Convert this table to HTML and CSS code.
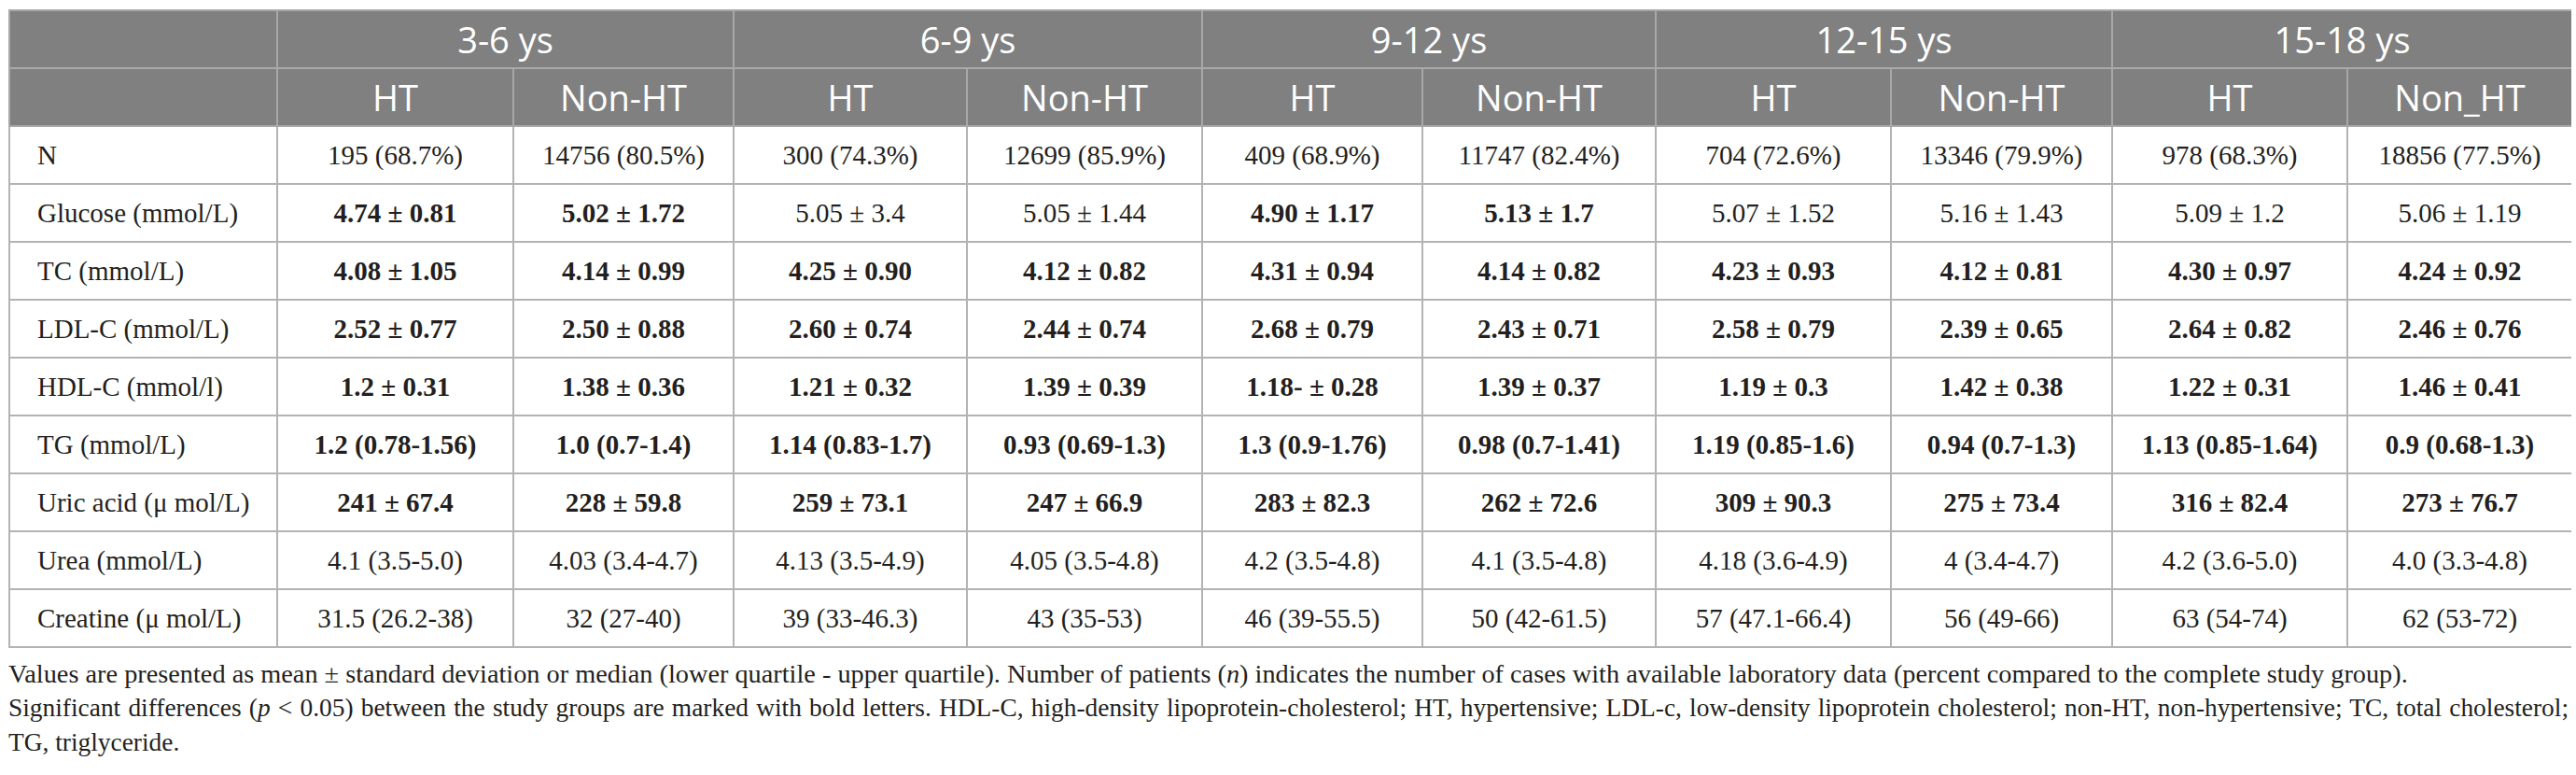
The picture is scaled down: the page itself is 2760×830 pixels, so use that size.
FILE: index.html
```html
<!DOCTYPE html>
<html lang="en">
<head>
  <meta charset="UTF-8" />
  <title>Laboratory data by age group</title>
  <link rel="stylesheet" href="styles.css">
</head>
<body>
  <table class="lab-table">
    <colgroup>
      <col><col><col><col><col><col><col><col><col><col><col>
    </colgroup>
    <thead>
      <tr>
        <th></th>
        <th colspan="2">3-6 ys</th>
        <th colspan="2">6-9 ys</th>
        <th colspan="2">9-12 ys</th>
        <th colspan="2">12-15 ys</th>
        <th colspan="2">15-18 ys</th>
      </tr>
      <tr>
        <th></th>
        <th>HT</th><th>Non-HT</th>
        <th>HT</th><th>Non-HT</th>
        <th>HT</th><th>Non-HT</th>
        <th>HT</th><th>Non-HT</th>
        <th>HT</th><th>Non_HT</th>
      </tr>
    </thead>
    <tbody>
      <tr>
        <td class="label">N</td>
        <td>195 (68.7%)</td><td>14756 (80.5%)</td>
        <td>300 (74.3%)</td><td>12699 (85.9%)</td>
        <td>409 (68.9%)</td><td>11747 (82.4%)</td>
        <td>704 (72.6%)</td><td>13346 (79.9%)</td>
        <td>978 (68.3%)</td><td>18856 (77.5%)</td>
      </tr>
      <tr>
        <td class="label">Glucose (mmol/L)</td>
        <td class="sig">4.74 ± 0.81</td><td class="sig">5.02 ± 1.72</td>
        <td>5.05 ± 3.4</td><td>5.05 ± 1.44</td>
        <td class="sig">4.90 ± 1.17</td><td class="sig">5.13 ± 1.7</td>
        <td>5.07 ± 1.52</td><td>5.16 ± 1.43</td>
        <td>5.09 ± 1.2</td><td>5.06 ± 1.19</td>
      </tr>
      <tr class="sig-row">
        <td class="label">TC (mmol/L)</td>
        <td>4.08 ± 1.05</td><td>4.14 ± 0.99</td>
        <td>4.25 ± 0.90</td><td>4.12 ± 0.82</td>
        <td>4.31 ± 0.94</td><td>4.14 ± 0.82</td>
        <td>4.23 ± 0.93</td><td>4.12 ± 0.81</td>
        <td>4.30 ± 0.97</td><td>4.24 ± 0.92</td>
      </tr>
      <tr class="sig-row">
        <td class="label">LDL-C (mmol/L)</td>
        <td>2.52 ± 0.77</td><td>2.50 ± 0.88</td>
        <td>2.60 ± 0.74</td><td>2.44 ± 0.74</td>
        <td>2.68 ± 0.79</td><td>2.43 ± 0.71</td>
        <td>2.58 ± 0.79</td><td>2.39 ± 0.65</td>
        <td>2.64 ± 0.82</td><td>2.46 ± 0.76</td>
      </tr>
      <tr class="sig-row">
        <td class="label">HDL-C (mmol/l)</td>
        <td>1.2 ± 0.31</td><td>1.38 ± 0.36</td>
        <td>1.21 ± 0.32</td><td>1.39 ± 0.39</td>
        <td>1.18- ± 0.28</td><td>1.39 ± 0.37</td>
        <td>1.19 ± 0.3</td><td>1.42 ± 0.38</td>
        <td>1.22 ± 0.31</td><td>1.46 ± 0.41</td>
      </tr>
      <tr class="sig-row">
        <td class="label">TG (mmol/L)</td>
        <td>1.2 (0.78-1.56)</td><td>1.0 (0.7-1.4)</td>
        <td>1.14 (0.83-1.7)</td><td>0.93 (0.69-1.3)</td>
        <td>1.3 (0.9-1.76)</td><td>0.98 (0.7-1.41)</td>
        <td>1.19 (0.85-1.6)</td><td>0.94 (0.7-1.3)</td>
        <td>1.13 (0.85-1.64)</td><td>0.9 (0.68-1.3)</td>
      </tr>
      <tr class="sig-row">
        <td class="label">Uric acid (μ mol/L)</td>
        <td>241 ± 67.4</td><td>228 ± 59.8</td>
        <td>259 ± 73.1</td><td>247 ± 66.9</td>
        <td>283 ± 82.3</td><td>262 ± 72.6</td>
        <td>309 ± 90.3</td><td>275 ± 73.4</td>
        <td>316 ± 82.4</td><td>273 ± 76.7</td>
      </tr>
      <tr>
        <td class="label">Urea (mmol/L)</td>
        <td>4.1 (3.5-5.0)</td><td>4.03 (3.4-4.7)</td>
        <td>4.13 (3.5-4.9)</td><td>4.05 (3.5-4.8)</td>
        <td>4.2 (3.5-4.8)</td><td>4.1 (3.5-4.8)</td>
        <td>4.18 (3.6-4.9)</td><td>4 (3.4-4.7)</td>
        <td>4.2 (3.6-5.0)</td><td>4.0 (3.3-4.8)</td>
      </tr>
      <tr>
        <td class="label">Creatine (μ mol/L)</td>
        <td>31.5 (26.2-38)</td><td>32 (27-40)</td>
        <td>39 (33-46.3)</td><td>43 (35-53)</td>
        <td>46 (39-55.5)</td><td>50 (42-61.5)</td>
        <td>57 (47.1-66.4)</td><td>56 (49-66)</td>
        <td>63 (54-74)</td><td>62 (53-72)</td>
      </tr>
    </tbody>
  </table>

  <div class="notes">
    <p>Values are presented as mean ± standard deviation or median (lower quartile - upper quartile). Number of patients (<i>n</i>) indicates the number of cases with available laboratory data (percent compared to the complete study group).</p>
    <p class="abbr">Significant differences (<i>p</i> &lt; 0.05) between the study groups are marked with bold letters. HDL-C, high-density lipoprotein-cholesterol; HT, hypertensive; LDL-c, low-density lipoprotein cholesterol; non-HT, non-hypertensive; TC, total cholesterol; <span class="keep">TG, triglyceride.</span></p>
  </div>
</body>
</html>
```

FILE: styles.css
```css
body {
  margin: 10px 5px 0 9px;
  background: #fff;
  color: #231f20;
  font-family: "Liberation Serif", "Times New Roman", serif;
}

.lab-table {
  width: 2746px;
  table-layout: fixed;
  border-collapse: collapse;
  border: 2px solid #b3b3b3;
}
/* column widths follow the source figure, which sized them by content */
.lab-table col:nth-child(1) { width: 287px; }
.lab-table col:nth-child(2) { width: 253px; }
.lab-table col:nth-child(3) { width: 236px; }
.lab-table col:nth-child(4) { width: 250px; }
.lab-table col:nth-child(5) { width: 252px; }
.lab-table col:nth-child(6) { width: 236px; }
.lab-table col:nth-child(7) { width: 250px; }
.lab-table col:nth-child(8) { width: 252px; }
.lab-table col:nth-child(9) { width: 237px; }
.lab-table col:nth-child(10) { width: 252px; }
.lab-table col:nth-child(11) { width: 241px; }

.lab-table th {
  height: 60px;
  padding: 0;
  background: #808080;
  color: #fff;
  font-family: "Open Sans", "Liberation Sans", sans-serif;
  font-weight: 400;
  font-size: 38px;
  text-align: center;
  border: 2px solid #a8a8a8;
}

.lab-table td {
  height: 60px;
  padding: 0;
  font-size: 29px;
  text-align: center;
  white-space: nowrap;
  border: 2px solid #b3b3b3;
}
.lab-table td.label {
  text-align: left;
  padding-left: 29px;
}
.lab-table td.sig,
.sig-row td { font-weight: 700; }
.sig-row td.label { font-weight: 400; }

.notes {
  margin-top: 9px;
  margin-right: 3px;
  font-size: 28.3px;
  line-height: 37px;
  text-align: justify;
}
.notes p { margin: 0; }
.notes .abbr { font-size: 27.4px; }
.notes .keep { white-space: nowrap; }
```
